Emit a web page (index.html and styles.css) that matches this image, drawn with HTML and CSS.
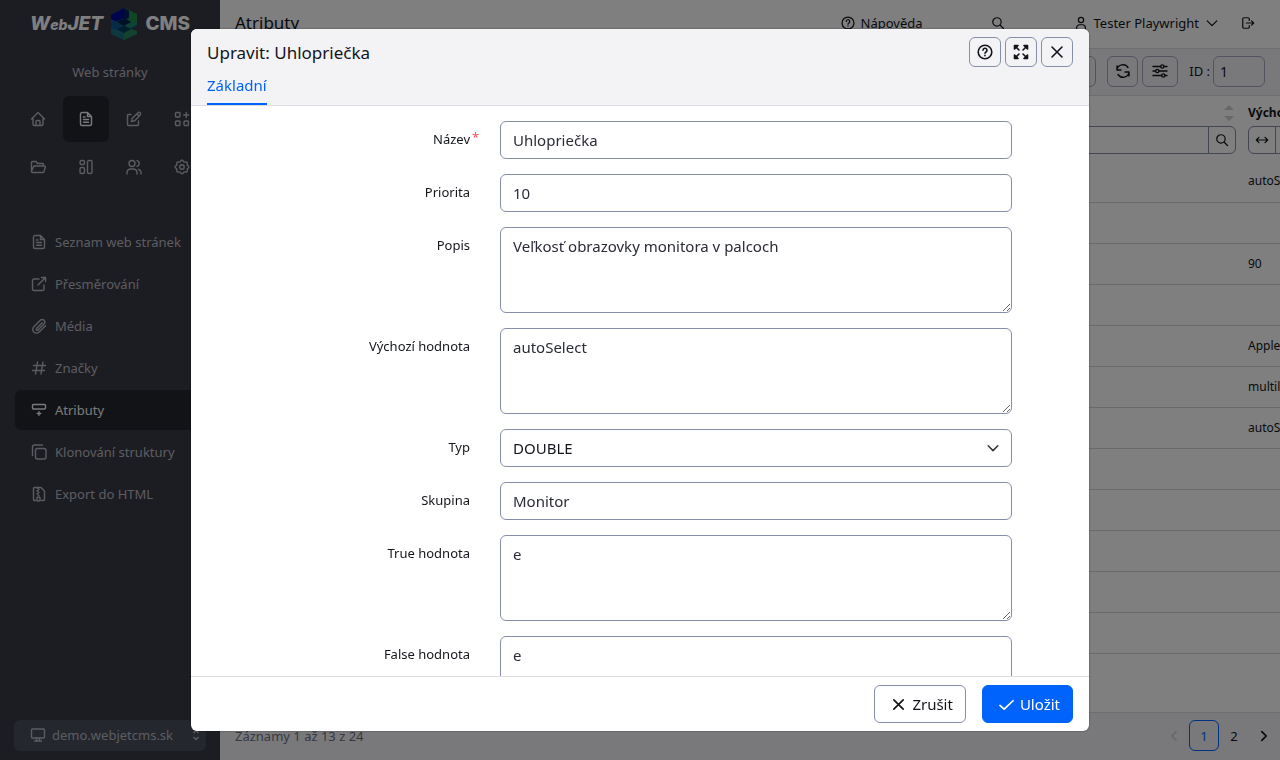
FILE: index.html
```html
<!DOCTYPE html>
<html lang="cs">
<head>
<meta charset="utf-8">
<meta name="viewport" content="width=device-width, initial-scale=1">
<title>Atributy</title>
<link rel="stylesheet" href="styles.css">
</head>
<body>
<svg class="sprite" aria-hidden="true">
  <symbol id="i-doc" viewBox="0 0 16 16"><path d="M9.500 1.500H4A1.500 1.500 0 0 0 2.500 3v10A1.500 1.500 0 0 0 4 14.500h8a1.500 1.500 0 0 0 1.500-1.500V5.500zM9.500 1.500v4h4M5.500 6h1.500M5.500 8.500h5M5.500 11.200h5"/></symbol>
  <symbol id="i-help" viewBox="0 0 16 16"><circle cx="8" cy="8" r="6.800"/><path d="M6 6.300a2 2 0 1 1 3 1.700c-.7.4-1 .7-1 1.300M8 11.300v.4"/></symbol>
  <symbol id="i-search" viewBox="0 0 16 16"><circle cx="6.800" cy="6.800" r="4.800"/><path d="M10.300 10.300l4 4"/></symbol>
  <symbol id="i-down" viewBox="0 0 16 16"><path d="M2.500 5.500L8 11l5.500-5.500"/></symbol>
  <symbol id="i-x" viewBox="0 0 16 16"><path d="M3 3l10 10M13 3L3 13"/></symbol>
</svg>
<div class="app">
  <aside class="sidebar">
    <a class="logo" href="#" aria-label="WebJET CMS">
      <span class="logo-text logo-italic">W<small>eb</small>JET</span>
      <svg class="logo-mark" viewBox="0 0 28 32" aria-hidden="true">
        <path fill="#16509e" d="M1 7l13-7v32L1 26z"/>
        <path fill="#00089a" d="M1 7l13-7v17L1 11z"/>
        <path fill="#248a4c" d="M14 0l13 6v7l-13 5z"/>
        <path fill="#001c66" d="M14 0v12l5-2V3z"/>
        <path fill="#0a5a8c" d="M1 16l13-6 8 5 5-1v4l-13 6z"/>
        <path fill="#23876a" d="M22 14l5-2v5l-7 3-6-3z"/>
        <path fill="#00204a" d="M7 14l7-4 7 4-7 4z"/>
        <path fill="#1c6e80" d="M1 20l13 4 7-3 6 2v3l-13 6-13-6z"/>
        <path fill="#28845c" d="M14 24l7-3 6 2v3l-13 6z"/>
        <path fill="#003c58" d="M7 21l7-3 7 3-7 4z"/>
      </svg>
      <span class="logo-text">CMS</span>
    </a>
    <h2 class="section-name">Web stránky</h2>
    <nav class="modules" aria-label="Moduly">
      <a href="#" aria-label="Úvod"><svg class="icon" viewBox="0 0 16 16"><path d="M1.500 8L8 1.500 14.500 8M3 7v6a1.500 1.500 0 0 0 1.500 1.500h7A1.500 1.500 0 0 0 13 13V7M6 14V10.500A1 1 0 0 1 7 9.500h2a1 1 0 0 1 1 1V14"/></svg></a>
      <a href="#" class="active" aria-label="Web stránky"><svg class="icon"><use href="#i-doc"/></svg></a>
      <a href="#" aria-label="Šablony"><svg class="icon" viewBox="0 0 16 16"><path d="M5 3.500H2.500a1 1 0 0 0-1 1v9a1 1 0 0 0 1 1h9a1 1 0 0 0 1-1V10M5.500 10.500l.8-3.200L12 1.800a1.500 1.500 0 0 1 2.200 2.200L8.700 9.700zM11 3l2 2"/></svg></a>
      <a href="#" aria-label="Aplikace"><svg class="icon" viewBox="0 0 16 16"><rect x="1.500" y="1.500" width="4.500" height="4.500" rx="1"/><rect x="1.500" y="10" width="4.500" height="4.500" rx="1"/><rect x="10" y="10" width="4.500" height="4.500" rx="1"/><path d="M12.200 1.500v5M9.700 4h5"/></svg></a>
      <a href="#" aria-label="Soubory"><svg class="icon" viewBox="0 0 16 16"><path d="M1.500 12V3.500a1 1 0 0 1 1-1H6l1.500 2h5a1 1 0 0 1 1 1V7M4.500 7h10a.8.8 0 0 1 .8 1l-1.300 4.700a1 1 0 0 1-1 .8H2.500a1 1 0 0 1-1-1.300L3.500 7.700a1 1 0 0 1 1-.7z"/></svg></a>
      <a href="#" aria-label="Bloky"><svg class="icon" viewBox="0 0 16 16"><rect x="2" y="1.500" width="4.500" height="4" rx="1.500"/><rect x="2" y="8.500" width="4.500" height="6" rx="1.500"/><rect x="9.500" y="1.500" width="4.500" height="13" rx="1.500"/></svg></a>
      <a href="#" aria-label="Uživatelé"><svg class="icon" viewBox="0 0 16 16"><circle cx="6" cy="4.500" r="3"/><path d="M1 15v-1.500a3.500 3.500 0 0 1 3.500-3.500h3a3.500 3.500 0 0 1 3.500 3.500V15M11 1.600a3 3 0 0 1 0 5.800M12.500 10.300A3.500 3.500 0 0 1 15 13.500V15"/></svg></a>
      <a href="#" aria-label="Nastavení"><svg class="icon" viewBox="0 0 16 16"><circle cx="8" cy="8" r="2.200"/><path d="M6.600 2.200a1.500 1.500 0 0 1 2.800 0 1.500 1.500 0 0 0 1.900.8 1.500 1.500 0 0 1 1.900 1.900 1.500 1.500 0 0 0 .7 1.700 1.500 1.500 0 0 1 0 2.800 1.500 1.500 0 0 0-.7 1.700 1.500 1.500 0 0 1-1.900 1.900 1.500 1.500 0 0 0-1.900.8 1.500 1.500 0 0 1-2.800 0 1.500 1.500 0 0 0-1.900-.8 1.500 1.500 0 0 1-1.900-1.900 1.500 1.500 0 0 0-.7-1.700 1.500 1.500 0 0 1 0-2.800 1.500 1.500 0 0 0 .7-1.700A1.500 1.500 0 0 1 4.700 3a1.500 1.500 0 0 0 1.900-.8z"/></svg></a>
    </nav>
    <nav class="menu" aria-label="Web stránky">
      <a href="#"><svg class="icon"><use href="#i-doc"/></svg>Seznam web stránek</a>
      <a href="#"><svg class="icon" viewBox="0 0 16 16"><path d="M8 3H3a1.500 1.500 0 0 0-1.500 1.500V13A1.500 1.500 0 0 0 3 14.500h8.500A1.500 1.500 0 0 0 13 13V9M7 9l7.500-7.500M10.500 1.500h4v4"/></svg>Přesměrování</a>
      <a href="#"><svg class="icon" viewBox="0 0 16 16"><path d="M11.200 4.700L5.500 10.400a1 1 0 0 0 1.500 1.500l6-6a2.500 2.500 0 0 0-3.700-3.700L2.800 8.700a3.700 3.700 0 0 0 5.300 5.300L14.500 7.700"/></svg>Média</a>
      <a href="#"><svg class="icon" viewBox="0 0 16 16"><path d="M6.500 2L4.500 14M12 2l-2 12M2.500 5.500h12M1.500 10.500h12"/></svg>Značky</a>
      <a href="#" class="active"><svg class="icon" viewBox="0 0 16 16"><rect x="1.500" y="2.500" width="13" height="4.500" rx="1"/><path d="M8 9.700v3.600M6.200 11.500h3.600"/></svg>Atributy</a>
      <a href="#"><svg class="icon" viewBox="0 0 16 16"><rect x="4.500" y="4.500" width="10.500" height="10.500" rx="2"/><path d="M1.500 11.500V3a2 2 0 0 1 2-2h8"/></svg>Klonování struktury</a>
      <a href="#"><svg class="icon" viewBox="0 0 16 16"><path d="M5 14.500H3.500a1 1 0 0 1-1-1v-11a1 1 0 0 1 1-1H10L13.500 5v8.500a1 1 0 0 1-1 1H10M6 2l2 1.500-2 1.500 2 1.500L6 8l2 1.500"/><rect x="6" y="11" width="3" height="4" rx="1"/></svg>Export do HTML</a>
    </nav>
    <button type="button" class="site">
      <svg class="icon" viewBox="0 0 16 16"><rect x="1.500" y="2" width="13" height="9" rx="1"/><path d="M6.500 11v2.500M9.500 11v2.500M4.500 14h7"/></svg>
      <span>demo.webjetcms.sk</span>
      <svg class="updown" viewBox="0 0 8 12"><path d="M1.500 4L4 1.500 6.500 4M1.500 8L4 10.500 6.500 8"/></svg>
    </button>
  </aside>

  <main class="main">
    <header class="topbar">
      <h1>Atributy</h1>
      <a class="top-help" href="#"><svg class="icon"><use href="#i-help"/></svg>Nápověda</a>
      <button type="button" class="top-search" aria-label="Hledat"><svg class="icon"><use href="#i-search"/></svg></button>
      <button type="button" class="top-user"><svg class="icon" viewBox="0 0 16 16"><circle cx="8" cy="4.500" r="3"/><path d="M3 15v-1.500A3.500 3.500 0 0 1 6.500 10h3a3.500 3.500 0 0 1 3.500 3.500V15"/></svg>Tester Playwright<svg class="icon"><use href="#i-down"/></svg></button>
      <a class="top-exit" href="#" aria-label="Odhlásit"><svg class="icon" viewBox="0 0 16 16"><path d="M9.500 5V3.500a1.500 1.500 0 0 0-1.500-1.500H3.500A1.500 1.500 0 0 0 2 3.500v9A1.500 1.500 0 0 0 3.500 14H8a1.500 1.500 0 0 0 1.500-1.500V11M6 8h8.500M12 5.500L14.500 8 12 10.500"/></svg></a>
    </header>
    <div class="toolbar">
      <button type="button" class="tool" aria-label="Export"></button>
      <div class="tool-group">
        <button type="button" class="tool" aria-label="Obnovit"><svg class="icon" viewBox="0 0 16 16"><path d="M2 7a6 6 0 0 1 11-2.500M14 9a6 6 0 0 1-11 2.500M2 3v4h4M14 13V9H10"/></svg></button>
        <button type="button" class="tool tool-wide" aria-label="Nastavení sloupců"><svg class="icon" viewBox="0 0 16 16"><path d="M1 3.500h7.500M12 3.500h3M1 8h2.500M7 8h8M1 12.500h8.500M13 12.500h2"/><circle cx="10.300" cy="3.500" r="1.600"/><circle cx="5.300" cy="8" r="1.600"/><circle cx="11.300" cy="12.500" r="1.600"/></svg></button>
      </div>
      <label class="id-field">ID :<input type="text" value="1"></label>
    </div>
    <div class="table-wrap">
      <table class="grid">
        <colgroup><col><col class="col-default"></colgroup>
        <thead>
          <tr>
            <th aria-label="Název">
              <div class="th-title"><svg class="sort" viewBox="0 0 10 16"><path d="M5 0l5 5H0zM5 16l5-5H0z"/></svg></div>
              <div class="filter"><input type="text" aria-label="Filtr názvu"><button type="button" aria-label="Hledat"><svg class="icon"><use href="#i-search"/></svg></button></div>
            </th>
            <th>
              <div class="th-title th-start">Výchozí hodnota</div>
              <div class="filter"><button type="button" aria-label="Obsahuje"><svg class="icon" viewBox="0 0 16 16"><path d="M1.500 8h13M4.500 5L1.500 8l3 3M11.500 5l3 3-3 3"/></svg></button><input type="text" aria-label="Filtr výchozí hodnoty"></div>
            </th>
          </tr>
        </thead>
        <tbody>
          <tr><td></td><td>autoSelect</td></tr>
          <tr><td></td><td></td></tr>
          <tr><td></td><td>90</td></tr>
          <tr><td></td><td></td></tr>
          <tr><td></td><td>Apple</td></tr>
          <tr><td></td><td>multiline</td></tr>
          <tr><td></td><td>autoSelect</td></tr>
          <tr><td></td><td></td></tr>
          <tr><td></td><td></td></tr>
          <tr><td></td><td></td></tr>
          <tr><td></td><td></td></tr>
          <tr><td></td><td></td></tr>
          <tr><td></td><td></td></tr>
        </tbody>
      </table>
    </div>
    <footer class="pager">
      <span class="records">Záznamy 1 až 13 z 24</span>
      <button type="button" class="page" disabled aria-label="Předchozí"><svg class="icon" viewBox="0 0 16 16"><path d="M10.500 3L5.500 8l5 5"/></svg></button>
      <button type="button" class="page current">1</button>
      <button type="button" class="page">2</button>
      <button type="button" class="page" aria-label="Další"><svg class="icon bold" viewBox="0 0 16 16"><path d="M5.500 3l5 5-5 5"/></svg></button>
    </footer>
  </main>
</div>

<div class="backdrop">
  <section class="dialog" role="dialog" aria-modal="true" aria-labelledby="dlg-title">
    <header class="dialog-head">
      <div class="dialog-bar">
        <h2 id="dlg-title">Upravit: Uhlopriečka</h2>
        <button type="button" aria-label="Nápověda"><svg class="icon"><use href="#i-help"/></svg></button>
        <button type="button" aria-label="Maximalizovat"><svg class="icon" viewBox="0 0 16 16"><path d="M2 2l4 4M14 2l-4 4M2 14l4-4M14 14l-4-4"/><path class="solid" d="M1.500 1.500H5L1.500 5zM14.500 1.500H11L14.500 5zM1.500 14.500H5L1.500 11zM14.500 14.500H11l3.500-3.500z"/></svg></button>
        <button type="button" aria-label="Zavřít"><svg class="icon"><use href="#i-x"/></svg></button>
      </div>
      <nav class="tabs"><a href="#" class="tab">Základní</a></nav>
    </header>
    <form class="form" id="edit">
      <label for="f-name">Název<span class="required">*</span></label><input id="f-name" type="text" value="Uhlopriečka">
      <label for="f-prio">Priorita</label><input id="f-prio" type="text" value="10">
      <label for="f-desc">Popis</label><textarea id="f-desc">Veľkosť obrazovky monitora v palcoch</textarea>
      <label for="f-def">Výchozí hodnota</label><textarea id="f-def">autoSelect</textarea>
      <label for="f-type">Typ</label><div class="select"><select id="f-type"><option>DOUBLE</option></select><svg class="icon"><use href="#i-down"/></svg></div>
      <label for="f-group">Skupina</label><input id="f-group" type="text" value="Monitor">
      <label for="f-true">True hodnota</label><textarea id="f-true">e</textarea>
      <label for="f-false">False hodnota</label><textarea id="f-false">e</textarea>
    </form>
    <footer class="dialog-foot">
      <button type="button" class="btn"><svg class="icon"><use href="#i-x"/></svg>Zrušit</button>
      <button type="submit" form="edit" class="btn primary"><svg class="icon" viewBox="0 0 16 16"><path d="M1 9l4.500 4L15 4"/></svg>Uložit</button>
    </footer>
  </section>
</div>
</body>
</html>
```

FILE: styles.css
```css
* { box-sizing: border-box; }
html, body { height: 100%; }
body { margin: 0; overflow: hidden; font: 13px/20px "Noto Sans", sans-serif; color: #13151b; }
h1, h2 { margin: 0; font-weight: 400; }
a { color: inherit; text-decoration: none; }
button, input, select, textarea { font: inherit; color: inherit; margin: 0; }
button { border: 0; padding: 0; background: none; display: flex; align-items: center; justify-content: center; }
.sprite { display: none; }
.icon { width: 16px; height: 16px; flex: none; fill: none; stroke: currentColor; stroke-width: 1.4; stroke-linecap: round; stroke-linejoin: round; }
.bold { stroke-width: 2; }
.solid { fill: currentColor; }

.app { display: flex; height: 100%; }

.sidebar { width: 220px; flex: none; display: flex; flex-direction: column; padding: 8px 14px; background: #383a46; color: #b8b9c0; }
.logo { display: flex; align-items: center; justify-content: space-between; height: 32px; padding: 0 16px; color: #f4f4f6; }
.logo-text { font: 800 19px/24px Inter, sans-serif; color: #fff; }
.logo-italic { font-style: italic; }
.logo-text small { font-size: 14px; }
.logo-mark { width: 28px; height: 32px; }
.section-name { margin: 22px 0 14px; text-align: center; font-size: 13px; line-height: 20px; }
.modules { display: grid; grid-template-columns: repeat(4, 46px); gap: 2px; margin-left: 1px; }
.modules a { height: 46px; display: flex; align-items: center; justify-content: center; border-radius: 6px; }
.modules .active, .menu .active { background: #24262e; color: #f4f4f6; }
.menu { display: flex; flex-direction: column; gap: 2px; margin: 32px 0 0 1px; }
.menu a { display: flex; align-items: center; gap: 8px; height: 40px; padding-left: 16px; border-radius: 6px; }
.site { margin: auto 0 1px; height: 31px; gap: 6px; padding: 0 6px 2px 16px; border-radius: 6px; background: #4a4e5e; }
.site span { flex: 1; text-align: left; }
.updown { width: 8px; height: 12px; fill: none; stroke: currentColor; stroke-width: 1.4; }

.main { flex: 1; min-width: 0; display: flex; flex-direction: column; }
.topbar { display: flex; align-items: center; height: 49px; padding: 0 25px 2px 15px; border-bottom: 1px solid #dcdce2; }
.topbar h1 { flex: 1; font-size: 17px; line-height: 24px; }
.topbar .icon { width: 14px; height: 14px; }
.top-help, .top-user, .top-exit { display: flex; align-items: center; gap: 6px; }
.top-search { margin: 0 69px 0 68px; }
.top-user { margin-right: 22px; }
.toolbar { display: flex; align-items: center; justify-content: flex-end; gap: 11px; height: 47px; padding: 0 15px 2px; background: #f3f3f6; border-bottom: 1px solid #dcdce2; }
.tool-group { display: flex; gap: 4px; }
.tool { width: 31px; height: 31px; border: 1px solid #a3a8bd; border-radius: 6px; }
.tool-wide { width: 36px; }
.id-field { display: flex; align-items: center; gap: 3px; }
.id-field input { width: 52px; height: 31px; padding: 0 6px; border: 1px solid #a3a8bd; border-radius: 6px; background: transparent; font-size: 14px; }

.table-wrap { flex: 1; min-height: 0; overflow: hidden; }
.grid { width: calc(100% + 180px); table-layout: fixed; border-collapse: collapse; }
.col-default { width: 218px; }
.grid th { padding: 6px 6px 7px; text-align: left; font-size: 12px; }
.th-title { display: flex; align-items: center; justify-content: flex-end; height: 22px; margin-bottom: 2px; }
.th-start { justify-content: flex-start; }
.sort { width: 10px; height: 16px; fill: #cfd0d6; margin-right: 2px; }
.filter { display: flex; height: 28px; border: 1px solid #868ea9; border-radius: 6px; }
.filter input { flex: 1; min-width: 0; border: 0; background: none; }
.filter button { width: 27px; border-left: 1px solid #868ea9; }
.filter button:first-child { border-left: 0; border-right: 1px solid #868ea9; }
.filter .icon { width: 14px; height: 14px; }
.grid td { height: 41px; padding: 0 6px; border-bottom: 1px solid #d3d4dc; font-size: 12px; }
.grid tr:last-child td { border-bottom: 0; }

.pager { display: flex; align-items: center; height: 48px; padding: 0 1px 2px 15px; background: #f3f3f6; border-top: 1px solid #dcdce2; }
.records { flex: 1; color: #6d7285; }
.page { width: 30px; height: 31px; }
.page .icon { width: 14px; height: 14px; }
.page.current { border: 1px solid #0063fb; border-radius: 6px; color: #0063fb; }
.page:disabled { color: #c6c7cf; }

.backdrop { position: fixed; inset: 0; display: flex; justify-content: center; padding: 29px 16px; background: rgba(0, 0, 0, .5); }
.dialog { width: 100%; max-width: 898px; display: flex; flex-direction: column; background: #fff; border-radius: 6px; overflow: hidden; box-shadow: 0 0 2px rgba(0, 0, 0, .5); }
.dialog-head { display: flex; flex-direction: column; height: 77px; padding: 8px 16px 0; background: #f3f3f6; border-bottom: 1px solid #dcdce2; }
.dialog-bar { display: flex; align-items: flex-start; gap: 4px; height: 30px; }
.dialog-bar h2 { flex: 1; font-size: 17px; line-height: 32px; }
.dialog-bar button { width: 32px; height: 30px; border: 1px solid #868ea9; border-radius: 6px; }
.dialog-bar .icon { stroke-width: 1.6; }
.tabs { display: flex; flex: 1; }
.tab { display: flex; align-items: center; color: #0063fb; font-size: 15px; border-bottom: 2px solid #0063fb; }
.form { flex: 1; min-height: 0; overflow: hidden; display: grid; grid-template-columns: 279fr 512fr; grid-auto-rows: max-content; align-items: start; gap: 15px 30px; padding: 15px 77px 15px 0; }
.form label { position: relative; padding-top: 8px; text-align: right; }
.required { position: absolute; left: calc(100% + 2px); top: 6px; color: #ff4b58; }
.form input, .form textarea, .form select { display: block; width: 100%; height: 38px; padding: 6px 12px; border: 1px solid #868ea9; border-radius: 6px; background: #fff; font-size: 15px; line-height: 24px; color: #2a2c36; }
.form textarea { height: 86px; resize: vertical; }
.select { display: grid; align-items: center; }
.form .select select { grid-area: 1 / 1; appearance: none; color: #13151b; }
.select .icon { grid-area: 1 / 1; justify-self: end; margin-right: 12px; width: 14px; height: 14px; stroke-width: 1.8; color: #343a40; pointer-events: none; }
.dialog-foot { display: flex; justify-content: flex-end; gap: 16px; padding: 8px 16px; border-top: 1px solid #dcdce2; }
.btn { height: 38px; gap: 6px; padding: 0 12px 0 16px; border: 1px solid #868ea9; border-radius: 6px; font-size: 15px; }
.btn .icon { width: 15px; height: 15px; stroke-width: 1.8; }
.btn.primary { background: #0063fb; border-color: #0063fb; color: #fff; }
```
